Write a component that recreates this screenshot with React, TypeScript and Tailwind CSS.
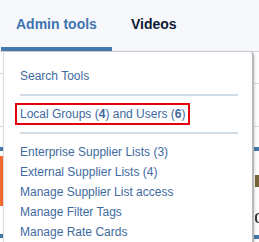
import React from "react";

const font = { fontFamily: '"Liberation Sans", Arial, sans-serif' };

function EdgeStrip({ side }: { side: "left" | "right" }) {
  if (side === "left") {
    return (
      <div className="w-[3px] flex flex-col">
        <div className="mt-[21px] h-px bg-[#d8dde3]" />
        <div className="mt-[52px] h-px bg-[#d8dde3]" />
        <div className="mt-[20px] h-[4px] bg-[#4579ac]" />
        <div className="mt-[5px] h-[50px] bg-[#f26a2e]" />
        <div className="mt-[28px] h-[4px] bg-[#4579ac]" />
      </div>
    );
  }
  return (
    <div className="w-[5px] flex flex-col items-end">
      <div className="mt-[31px] w-full h-px bg-[#d8dde3]" />
      <div className="mt-[42px] w-full h-px bg-[#d8dde3]" />
      <div className="mt-[20px] w-full h-[4px] bg-[#4579ac]" />
      <div className="mt-[24px] w-[4px] h-[12px] bg-[#7a6a3a]" />
      <div className="mt-[26px] w-[4px] h-[10px] border-l-2 border-y border-[#333] rounded-l-sm" />
      <div className="mt-[12px] w-full h-[4px] bg-[#4579ac]" />
    </div>
  );
}

export default function App() {
  const items = [
    "Enterprise Supplier Lists (3)",
    "External Supplier Lists (4)",
    "Manage Supplier List access",
    "Manage Filter Tags",
    "Manage Rate Cards",
  ];
  return (
    <div className="relative w-[259px] h-[242px] overflow-hidden bg-white flex flex-col" style={font}>
      {/* top nav */}
      <div className="h-[52px] shrink-0 bg-[#f7f8fc] border-b border-[#d2d4d8] flex items-start">
        <div className="ml-[1px] w-[111px] h-[51px] flex flex-col">
          <div className="pt-[16px] pl-[15px] text-[14px] leading-4 font-bold text-[#3f74b0] flex-1">
            Admin tools
          </div>
          <div className="h-[4px] bg-[#4579ac]" />
        </div>
        <div className="ml-[4px] pl-[15px] pt-[16px] text-[14px] leading-4 font-bold text-[#0c1736]">
          Videos
        </div>
      </div>

      {/* page content peeking at the edges */}
      <div className="flex-1 flex justify-between">
        <EdgeStrip side="left" />
        <EdgeStrip side="right" />
      </div>

      {/* dropdown menu (overlay) */}
      <div className="absolute left-[3px] top-[52px] w-[251px] h-[200px] bg-white border-l border-[#dcdcdc] border-r-2 border-r-[#b8b8b8] rounded-tr-[4px] shadow-[1px_0_3px_rgba(0,0,0,0.15)]">
        <div className="px-[16px] pt-[14px] flex flex-col items-start text-[12px] leading-5 text-[#3e6aa0]">
          <div>Search Tools</div>
          <div className="mt-[8px] h-[2px] w-[218px] bg-[#d2dce7]" />
          <div className="mt-[7px] -ml-[5px] border-2 border-[#e4000f] px-[3px] leading-[18px]">
            Local Groups (<span className="font-bold">4</span>) and Users (<span className="font-bold">6</span>)
          </div>
          <div className="mt-[7px] h-[2px] w-[218px] bg-[#d2dce7]" />
          <div className="mt-[8px] flex flex-col">
            {items.map((it) => (
              <div key={it}>{it}</div>
            ))}
          </div>
        </div>
      </div>
    </div>
  );
}
